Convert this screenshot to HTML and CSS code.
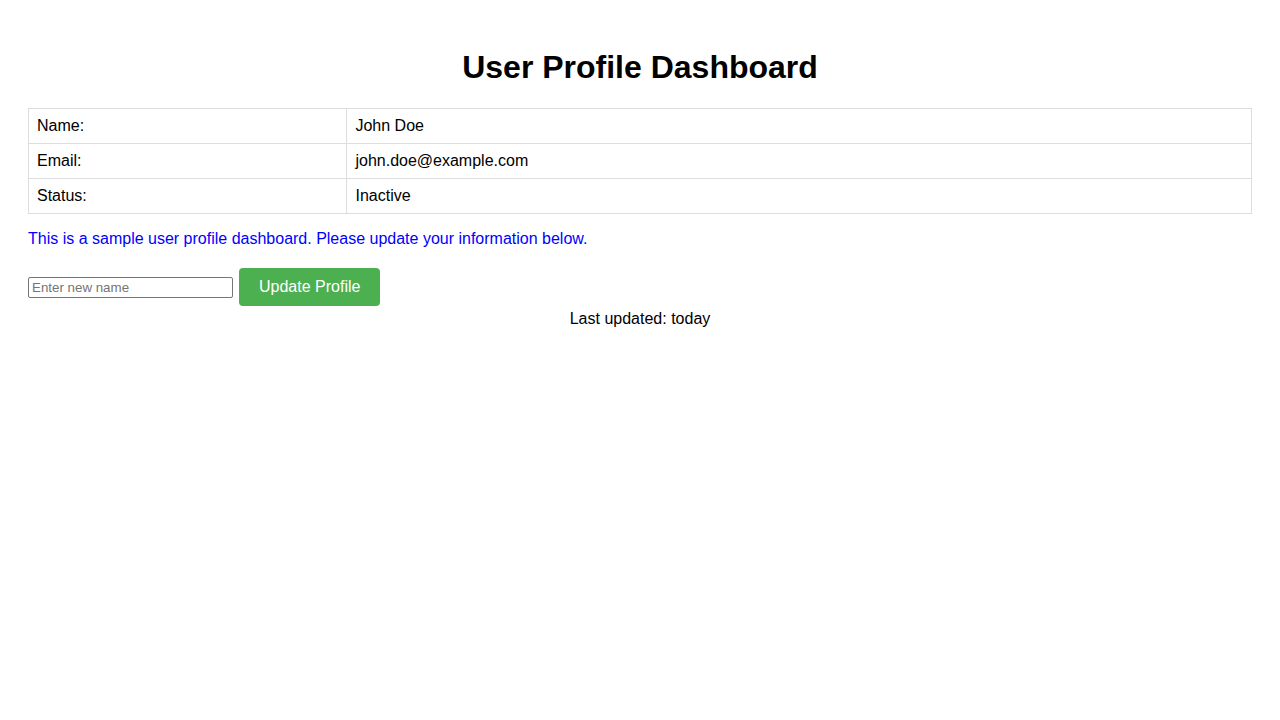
FILE: index.html
```html
<!DOCTYPE html>
<html lang="en">
<head>
<meta charset="utf-8">
<title>User Profile Dashboard</title>
<link rel="stylesheet" href="styles.css">
</head>
<body>
<h1 class="title">User Profile Dashboard</h1>
<table class="profile">
  <tr><td>Name:</td><td>John Doe</td></tr>
  <tr><td>Email:</td><td>john.doe@example.com</td></tr>
  <tr><td>Status:</td><td>Inactive</td></tr>
</table>
<p class="note">This is a sample user profile dashboard. Please update your information below.</p>
<div class="form-row">
  <input class="name-input" type="text" placeholder="Enter new name">
  <button class="update-btn" type="button">Update Profile</button>
</div>
<div class="updated">Last updated: today</div>
</body>
</html>
```
FILE: styles.css
```css
body {
  margin: 8px;
  padding: 20px;
  font-family: Arial, "Liberation Sans", sans-serif;
  font-size: 16px;
  color: #000;
  background: #fff;
}
.title {
  text-align: center;
  font-size: 32px;
  margin: 21.44px 0;
}
.profile {
  width: 100%;
  border-collapse: collapse;
}
.profile td {
  border: 1px solid #ddd;
  padding: 8px;
  text-align: left;
}
.note {
  color: #0000ff;
  margin: 16px 0 20px;
}
.form-row {
  display: flex;
  align-items: center;
  gap: 6px;
}
.name-input {
  box-sizing: border-box;
  width: 205px;
  height: 21px;
  font-family: Arial, "Liberation Sans", sans-serif;
  font-size: 13.33px;
  padding: 1px 3px;
  border: 1px solid #767676;
  border-radius: 2px;
  margin: 2px 0 0;
}
.name-input::placeholder {
  color: #757575;
}
.update-btn {
  background: #4caf50;
  color: #fff;
  border: none;
  border-radius: 4px;
  padding: 10px 20px;
  font-family: Arial, "Liberation Sans", sans-serif;
  font-size: 16px;
  margin: 0;
  cursor: pointer;
}
.updated {
  text-align: center;
  margin-top: 4px;
}
```
